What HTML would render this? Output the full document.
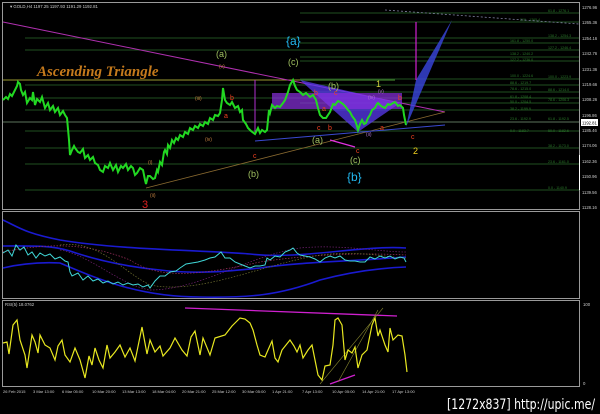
<!DOCTYPE html>
<html><head><meta charset="utf-8"><style>
html,body{margin:0;padding:0;background:#000;width:600px;height:414px;overflow:hidden}
svg{display:block;font-family:"Liberation Sans",sans-serif}
</style></head><body>
<svg width="600" height="414" viewBox="0 0 600 414" xmlns="http://www.w3.org/2000/svg">
<rect width="600" height="414" fill="#000"/>
<rect x="2.5" y="2.5" width="577" height="207" fill="none" stroke="#9a9a9a" stroke-width="1"/>
<text x="10" y="8" font-size="4.3" fill="#ccc">▾ GOLD,H4 1197.25 1197.93 1191.29 1192.81</text>
<g stroke="#2a6a2a" stroke-width="0.8">
<line x1="300" y1="13" x2="579" y2="13"/><line x1="300" y1="22" x2="579" y2="22"/>
<line x1="25" y1="38" x2="579" y2="38"/><line x1="300" y1="43" x2="579" y2="43"/>
<line x1="25" y1="50" x2="579" y2="50"/><line x1="300" y1="57" x2="579" y2="57"/>
<line x1="300" y1="61" x2="579" y2="61"/><line x1="300" y1="79" x2="579" y2="79"/>
<line x1="25" y1="85" x2="579" y2="85"/><line x1="300" y1="92" x2="579" y2="92"/>
<line x1="25" y1="98" x2="579" y2="98"/><line x1="300" y1="103" x2="579" y2="103"/>
<line x1="25" y1="110" x2="579" y2="110"/><line x1="25" y1="131" x2="579" y2="131"/>
<line x1="25" y1="148" x2="579" y2="148"/><line x1="25" y1="164" x2="579" y2="164"/>
<line x1="25" y1="190" x2="579" y2="190"/>
</g>
<line x1="3" y1="122" x2="579" y2="122" stroke="#7a9a7a" stroke-width="0.8"/>
<line x1="3" y1="80" x2="300" y2="80" stroke="#9a9a30" stroke-width="1"/>
<line x1="300" y1="80" x2="395" y2="80" stroke="#3c7a2a" stroke-width="1.2"/>
<g font-size="3.6" fill="#2a7a2a">
<text x="548" y="12">61.8 - 1276.1</text><text x="520" y="21">200 - 1265.4</text>
<text x="548" y="37">138.2 - 1254.3</text><text x="510" y="42">161.8 - 1250.0</text>
<text x="548" y="49">127.2 - 1246.4</text><text x="510" y="55">138.2 - 1240.2</text><text x="510" y="61">127.2 - 1236.0</text>
<text x="510" y="77">100.0 - 1224.6</text><text x="548" y="78">100.0 - 1223.9</text>
<text x="510" y="84">88.6 - 1219.7</text><text x="510" y="90">78.6 - 1215.0</text><text x="548" y="91">88.6 - 1214.0</text>
<text x="510" y="98">61.8 - 1208.4</text><text x="510" y="103">50.0 - 1204.5</text><text x="548" y="101">78.6 - 1206.3</text>
<text x="510" y="110">38.2 - 1199.9</text><text x="510" y="120">23.6 - 1192.9</text><text x="548" y="120">61.8 - 1192.5</text>
<text x="510" y="132">0.0 - 1183.7</text><text x="548" y="132">50.0 - 1182.6</text>
<text x="548" y="147">38.2 - 1173.0</text><text x="548" y="163">23.6 - 1161.0</text><text x="548" y="189">0.0 - 1140.9</text>
</g>
<g font-size="4.2" fill="#ccc">
<text x="582" y="9">1276.96</text><text x="582" y="24">1265.36</text><text x="582" y="40">1254.16</text>
<text x="582" y="55">1242.76</text><text x="582" y="71">1231.36</text><text x="582" y="86">1219.66</text>
<text x="582" y="101">1208.26</text><text x="582" y="117">1196.86</text><text x="582" y="132">1185.46</text>
<text x="582" y="147">1174.06</text><text x="582" y="163">1162.36</text><text x="582" y="178">1150.96</text>
<text x="582" y="194">1139.56</text><text x="582" y="209">1128.16</text>
</g>
<rect x="581" y="119" width="17" height="7" fill="#fff"/>
<text x="582" y="124.3" font-size="4.2" fill="#000">1192.81</text>
<line x1="579.5" y1="155" x2="579.5" y2="190" stroke="#fff" stroke-width="1"/>
<line x1="3" y1="22" x2="445" y2="112" stroke="#b030b0" stroke-width="1"/>
<line x1="146" y1="188" x2="445" y2="112" stroke="#8a6a30" stroke-width="0.8"/>
<line x1="255" y1="141" x2="445" y2="125" stroke="#3a4ad0" stroke-width="1"/>
<line x1="385" y1="10" x2="579" y2="24" stroke="#8080a0" stroke-width="0.8" stroke-dasharray="2,2"/>
<polygon points="300,80 358,132 400,103" fill="#5a3af0" opacity="0.75"/>
<rect x="272" y="93" width="130" height="16" fill="#8a30e0" opacity="0.7"/>
<polygon points="406,127 452,20 416,80" fill="#3a46e0" opacity="0.8"/>
<line x1="416" y1="22" x2="416" y2="80" stroke="#d020d0" stroke-width="1.2"/>
<line x1="255" y1="80" x2="255" y2="132" stroke="#b030d0" stroke-width="1"/>
<line x1="330" y1="140" x2="355" y2="147" stroke="#e030e0" stroke-width="1.2"/>
<polyline fill="none" stroke="#22d822" stroke-width="2" stroke-linejoin="miter" points="3,100 6,97 8,99 10,94 12,96 15,90 17,86 18,82 20,84 21,90 23,95 25,92 27,103 30,98 32,100 33,92 35,105 37,99 40,102 42,97 45,108 48,103 50,110 53,106 55,112 58,108 60,115 63,111 65,115 67,118 69,140 70,155 72,150 74,146 75,148 78,152 80,153 83,149 85,158 88,155 90,160 93,157 95,163 98,165 100,170 103,172 105,166 108,168 110,163 113,170 116,165 118,172 121,166 123,168 126,164 128,170 131,166 133,168 135,175 137,173 140,168 143,170 145,180 146,184 148,176 150,176 153,179 155,178 157,170 158,172 160,162 162,165 164,152 165,150 167,154 168,145 170,148 172,140 174,143 176,138 178,140 180,135 183,137 185,132 188,134 190,128 193,130 195,126 198,128 200,124 203,126 205,122 208,124 210,118 213,120 215,115 218,116 220,113 222,100 223,88 225,100 227,103 230,105 232,102 235,108 238,106 240,112 242,110 243,120 246,124 248,128 251,131 255,134 258,128 260,133 262,130 265,132 267,130 269,110 270,113 272,105 275,108 277,106 280,107 283,103 285,100 288,92 290,85 293,80 295,86 297,90 300,92 303,95 306,93 310,97 313,95 316,100 318,108 320,115 323,118 326,118 328,115 330,112 333,104 335,105 338,101 340,102 343,104 345,106 348,110 350,112 352,116 355,120 357,126 358,130 360,124 362,120 364,124 366,123 368,118 370,115 372,110 375,108 377,104 378,103 381,106 385,108 388,104 390,105 393,103 395,102 398,106 400,105 403,108 404,115 406,125"/>
<text x="37" y="76" style="font-family:'Liberation Serif',serif;font-style:italic;font-weight:bold;font-size:15px" fill="#c57a1c">Ascending Triangle</text>
<g font-size="9">
<text x="216" y="57" fill="#a0c060">(a)</text>
<text x="286" y="45" fill="#22b8f0" font-size="12">{a}</text>
<text x="288" y="65" fill="#a0c060">(c)</text>
<text x="328" y="89" fill="#a0c060">(b)</text>
<text x="376" y="87" fill="#d0d040">1</text>
<text x="248" y="177" fill="#a0c060">(b)</text>
<text x="312" y="143" fill="#a0c060">(a)</text>
<text x="350" y="163" fill="#a0c060">(c)</text>
<text x="347" y="181" fill="#22b8f0" font-size="12">{b}</text>
<text x="142" y="208" fill="#e02020" font-size="11">3</text>
<text x="413" y="154" fill="#f0d020">2</text>
</g>
<g font-size="7" fill="#f04020">
<text x="230" y="100">b</text><text x="224" y="118">a</text><text x="253" y="158">c</text>
<text x="314" y="95">b</text><text x="322" y="111">a</text><text x="334" y="95">c</text>
<text x="317" y="130">c</text><text x="328" y="130">b</text><text x="380" y="130">a</text>
<text x="398" y="100">b</text><text x="411" y="139">c</text><text x="356" y="153">c</text>
</g>
<g font-size="5" fill="#c08040">
<text x="219" y="68">(v)</text><text x="195" y="100">(iii)</text><text x="205" y="141">(iv)</text>
<text x="148" y="164">(i)</text><text x="150" y="197">(ii)</text>
<text x="368" y="99" fill="#b070d0">(iv)</text><text x="378" y="93" fill="#b070d0">(v)</text><text x="366" y="136" fill="#b070d0">(ii)</text>
</g>
<rect x="2.5" y="211.5" width="577" height="87" fill="none" stroke="#9a9a9a" stroke-width="1"/>
<g fill="none" stroke-width="1.6" stroke="#1a1ad0">
<path d="M3,220 C20,228 25,233 60,240 C120,250 200,250 250,254 C300,260 360,245 406,248"/>
<path d="M3,246 C30,246 50,245 70,251 C90,258 120,266 160,270 C200,275 240,270 260,268 C300,262 340,262 406,257"/>
<path d="M3,268 C20,264 40,262 60,263 C100,280 140,297 200,297 C250,298 280,295 320,280 C350,272 380,268 406,267"/>
</g>
<g fill="none" stroke-width="0.7" stroke-dasharray="1.5,1.5">
<path d="M3,252 C40,245 80,240 130,260 C160,280 200,275 260,262 C300,256 350,252 406,255" stroke="#a03060"/>
<path d="M60,245 C100,240 120,270 150,285 C200,295 260,265 320,255 C360,250 390,258 406,258" stroke="#707030"/>
<path d="M60,250 C90,255 120,285 150,290 C200,290 250,255 300,248 C340,244 380,252 406,252" stroke="#702070"/>
</g>
<polyline fill="none" stroke="#40d8d8" stroke-width="1" points="3,253 8,250 12,256 16,245 20,250 24,247 28,255 32,252 36,258 40,253 45,256 50,254 55,259 60,257 65,261 68,262 70,272 72,276 78,273 83,280 88,276 93,281 98,279 103,283 108,281 113,284 118,282 123,285 128,283 133,285 138,284 143,287 148,285 150,288 155,281 160,276 165,276 170,272 176,271 180,268 186,264 192,263 198,262 205,260 210,258 215,257 221,252 225,258 230,258 235,262 240,264 245,266 250,268 255,266 260,266 265,265 267,258 270,260 275,256 280,257 285,252 290,250 293,248 297,253 300,255 305,256 310,257 315,259 320,262 325,258 330,256 335,258 340,256 345,260 350,261 355,261 360,262 365,262 370,257 375,259 380,256 385,258 390,256 395,259 400,257 404,258 406,262"/>
<rect x="2.5" y="300.5" width="577" height="86" fill="none" stroke="#9a9a9a" stroke-width="1"/>
<text x="5" y="306" font-size="4.3" fill="#ccc">RSI(5) 18.0762</text>
<text x="583" y="306" font-size="4.3" fill="#ccc">100</text>
<text x="583" y="385" font-size="4.3" fill="#ccc">0</text>
<line x1="185" y1="308" x2="397" y2="316" stroke="#d020d0" stroke-width="1.3"/>
<line x1="330" y1="384" x2="355" y2="375" stroke="#d020d0" stroke-width="1.3"/>
<line x1="320" y1="384" x2="383" y2="308" stroke="#8a8a30" stroke-width="0.6"/>
<line x1="338" y1="382" x2="378" y2="310" stroke="#8a8a30" stroke-width="0.6"/>
<polyline fill="none" stroke="#e8e820" stroke-width="1.2" points="3,343 7,342 9,354 13,325 17,320 20,340 25,355 27,368 32,335 35,342 38,353 40,335 45,345 50,348 55,360 58,346 62,340 65,355 70,362 75,348 80,360 85,378 89,356 92,365 95,348 99,360 103,368 107,345 110,358 115,352 120,345 125,357 130,348 135,361 142,327 147,354 150,340 155,352 160,346 163,356 170,348 175,338 182,350 187,356 191,337 195,331 200,355 203,338 210,355 215,338 225,335 232,326 235,323 240,318 245,319 250,323 253,330 257,345 260,355 265,357 268,350 272,341 275,358 278,362 282,350 286,345 290,340 294,346 297,352 300,345 303,358 308,350 312,345 315,360 318,375 322,380 325,366 330,365 333,345 335,320 338,318 342,325 345,360 348,350 352,353 355,347 358,368 362,355 367,350 372,325 375,318 378,336 380,330 385,345 388,352 390,328 393,340 398,335 402,336 405,355 407,372"/>
<g font-size="4" fill="#ccc">
<text x="3" y="393">26 Feb 2015</text><text x="33" y="393">3 Mar 13:00</text><text x="62" y="393">6 Mar 05:00</text>
<text x="92" y="393">10 Mar 20:00</text><text x="122" y="393">13 Mar 13:00</text><text x="152" y="393">18 Mar 04:00</text>
<text x="182" y="393">20 Mar 21:00</text><text x="212" y="393">25 Mar 12:00</text><text x="242" y="393">30 Mar 05:00</text>
<text x="272" y="393">1 Apr 21:00</text><text x="302" y="393">7 Apr 13:00</text><text x="332" y="393">10 Apr 05:00</text>
<text x="362" y="393">14 Apr 21:00</text><text x="392" y="393">17 Apr 13:00</text>
</g>
<text x="447" y="409" style="font-family:'DejaVu Sans',sans-serif;font-size:14px" fill="#fff" textLength="148" lengthAdjust="spacingAndGlyphs">[1272x837] http://upic.me/</text>
</svg>
</body></html>
